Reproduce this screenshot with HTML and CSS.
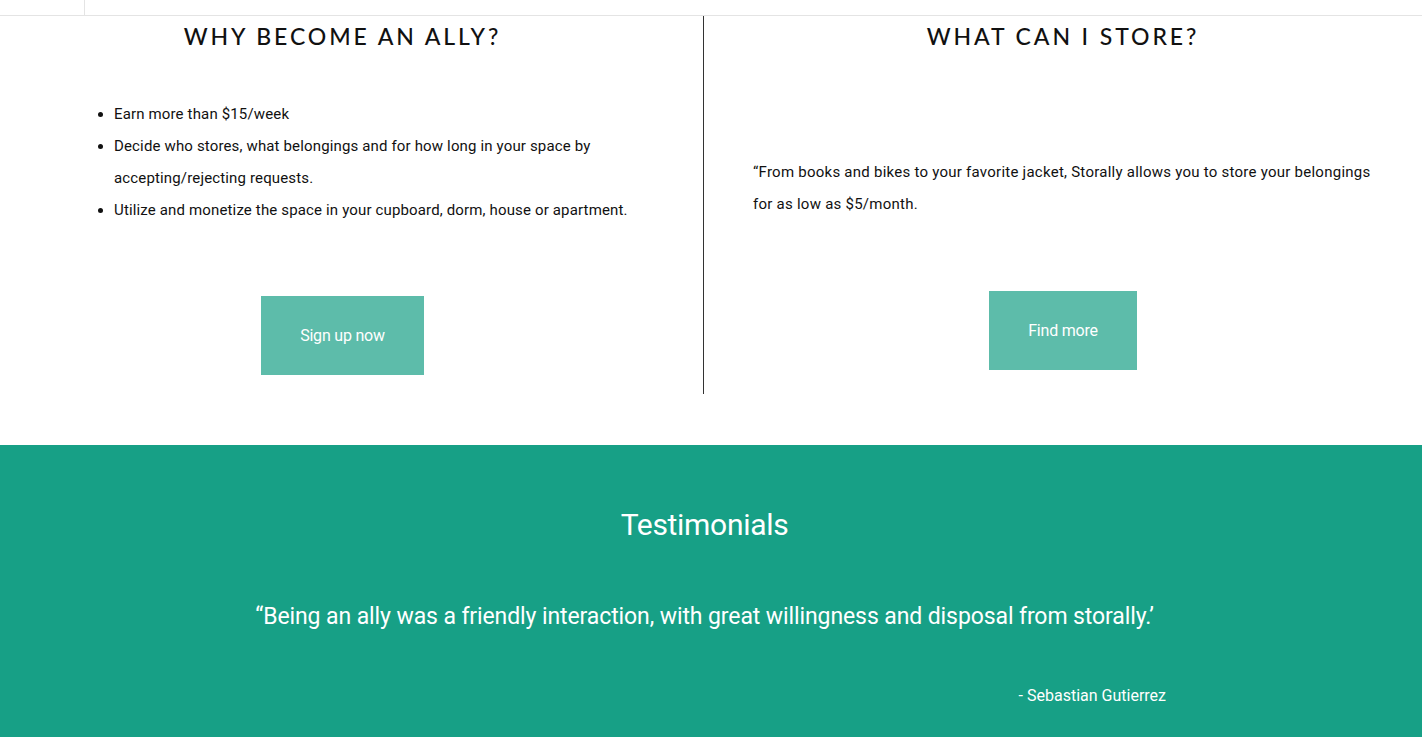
FILE: index.html
```html
<!DOCTYPE html>
<html lang="en">
<head>
<meta charset="utf-8">
<title>Storally - Become an ally</title>
<link rel="stylesheet" href="styles.css">
</head>
<body>
<header class="topbar">
  <div class="topbar-brand"></div>
  <div class="topbar-rest"></div>
</header>
<section class="split">
  <div class="col col-left">
    <h2 class="col-title">WHY BECOME AN ALLY?</h2>
    <ul class="benefits">
      <li>Earn more than $15/week</li>
      <li>Decide who stores, what belongings and for how long in your space by accepting/rejecting requests.</li>
      <li>Utilize and monetize the space in your cupboard, dorm, house or apartment.</li>
    </ul>
    <a class="btn btn-signup" href="#">Sign up now</a>
  </div>
  <div class="col col-right">
    <h2 class="col-title">WHAT CAN I STORE?</h2>
    <p class="store-text">“From books and bikes to your favorite jacket, Storally allows you to store your belongings for as low as $5/month.</p>
    <a class="btn btn-find" href="#">Find more</a>
  </div>
</section>
<section class="testimonials">
  <h2 class="testimonials-title">Testimonials</h2>
  <p class="quote">“Being an ally was a friendly interaction, with great willingness and disposal from storally.’</p>
  <p class="author">- Sebastian Gutierrez</p>
</section>
</body>
</html>
```
FILE: styles.css
```css
* { box-sizing: border-box; }
html, body { margin: 0; padding: 0; }
body {
  font-family: Roboto, "Liberation Sans", sans-serif;
  color: #111;
  background: #fff;
}
.topbar {
  display: flex;
  height: 16px;
  border-bottom: 1px solid #e4e4e4;
}
.topbar-brand {
  width: 85px;
  border-right: 1px solid #e4e4e4;
}
.topbar-rest { flex: 1; }

.split {
  display: flex;
  margin-bottom: 51px;
}
.col {
  display: flex;
  flex-direction: column;
  align-items: center;
}
.col-left {
  width: 703px;
  padding-right: 18px;
}
.col-right {
  flex: 1;
  border-left: 1px solid #333;
  min-height: 378px;
}
.col-title {
  margin: 0;
  font-family: Lato, "Noto Sans", sans-serif;
  font-weight: 500;
  font-size: 23px;
  letter-spacing: 2.9px;
  line-height: 40px;
  color: #111;
  text-align: center;
}
.benefits {
  align-self: flex-start;
  margin: 42px 0 0 74px;
  padding-left: 40px;
  width: 600px;
  font-size: 15px;
  line-height: 32px;
  letter-spacing: 0.15px;
}
.store-text {
  align-self: stretch;
  margin: 100px 40px 0 49px;
  font-size: 15px;
  line-height: 32px;
  letter-spacing: 0.25px;
}
.btn {
  display: flex;
  align-items: center;
  justify-content: center;
  height: 79px;
  background: #5dbcaa;
  color: #fff;
  font-size: 16px;
  text-decoration: none;
  letter-spacing: -0.2px;
}
.btn-signup {
  width: 163px;
  margin-top: 70px;
}
.btn-find {
  width: 148px;
  margin-top: 71px;
}

.testimonials {
  background: #17a086;
  color: #fff;
  padding: 60px 13px 60px 0;
  text-align: center;
}
.testimonials-title {
  margin: 0;
  font-weight: 400;
  font-size: 30px;
  line-height: 40px;
  letter-spacing: -0.3px;
}
.quote {
  margin: 56px 0 0;
  font-size: 23px;
  line-height: 32px;
  letter-spacing: -0.1px;
}
.author {
  margin: 51px 0 0;
  padding-right: 243px;
  text-align: right;
  font-size: 16px;
  line-height: 24px;
}
```
